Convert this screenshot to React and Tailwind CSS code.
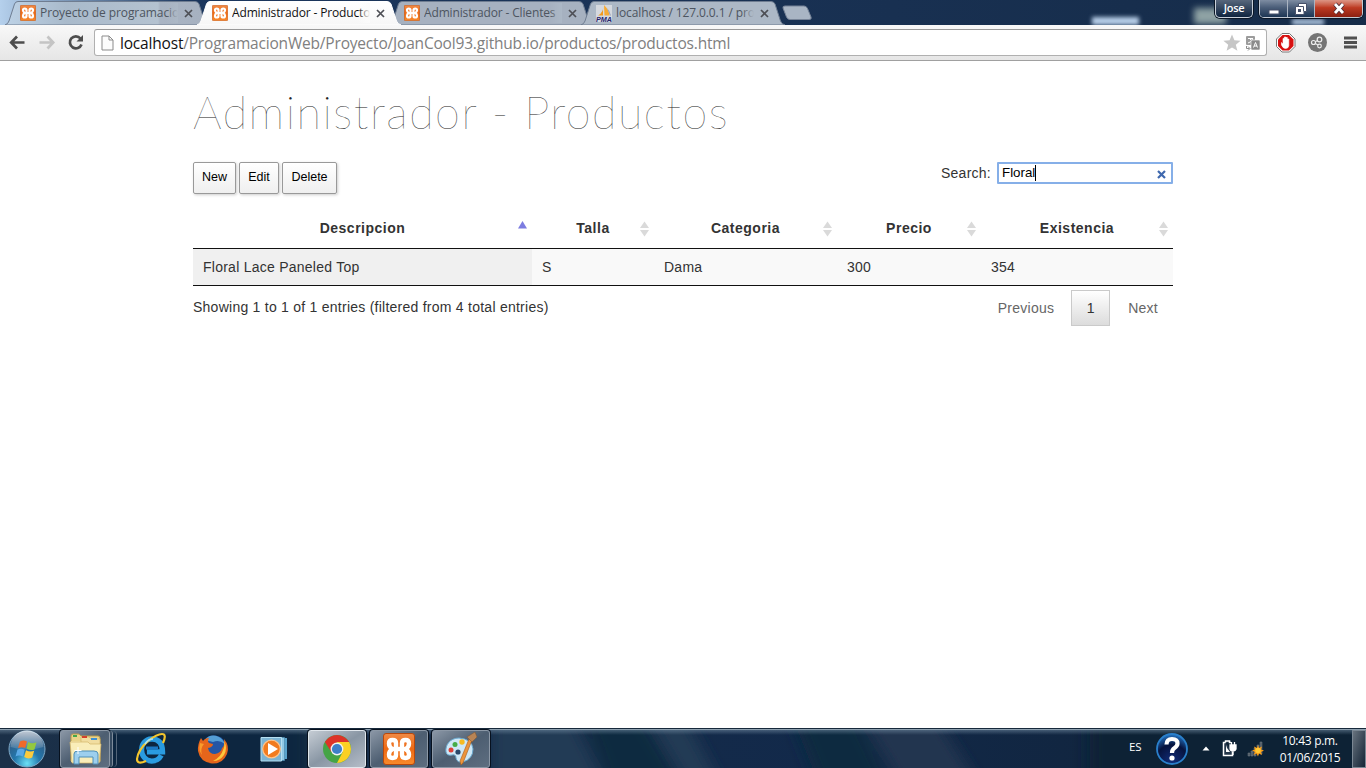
import React from "react";

const UI = "font-['Open_Sans','Noto_Sans',sans-serif]";

function Xampp({ size = 16 }) {
  return (
    <svg width={size} height={size} viewBox="0 0 32 32" className="shrink-0">
      <defs>
        <linearGradient id="xo" x1="0" y1="0" x2="0" y2="1">
          <stop offset="0" stopColor="#f08a45" />
          <stop offset="0.5" stopColor="#ee6a14" />
          <stop offset="1" stopColor="#f98a2c" />
        </linearGradient>
      </defs>
      <rect x="0.5" y="0.5" width="31" height="31" rx="2.5" fill="url(#xo)" stroke="#b8480c" />
      <g fill="none" stroke="#fff" strokeWidth="4.4" strokeLinejoin="round" strokeLinecap="round">
        <path d="M13 13.500V10Q13 7 9.500 7T6 10.500Q6 14 9.500 16Q6 18 6 21.500T9.500 25Q13 25 13 22V18.500" />
        <path d="M19 13.500V10Q19 7 22.500 7T26 10.500Q26 14 22.500 16Q26 18 26 21.500T22.500 25Q19 25 19 22V18.500" />
        <path d="M11 16H21" />
      </g>
    </svg>
  );
}

function PmaIcon() {
  return (
    <svg width="16" height="17" viewBox="0 0 16 17" className="shrink-0">
      <rect width="16" height="17" fill="#d5d9df" />
      <path d="M7 1Q8 7 2 10.500H7Z" fill="#f29a1c" />
      <path d="M8 0Q13 5 13.500 10.500H8.500Z" fill="#f7ab35" />
      <path d="M11 3Q14 6 15 10.500H14Z" fill="#9aa2b8" />
      <text x="0" y="16.500" fontSize="7" fontWeight="bold" fontStyle="italic" fontFamily="Liberation Sans" textLength="16" lengthAdjust="spacingAndGlyphs" fill="#26266e">PMA</text>
    </svg>
  );
}

function Tab({ title, icon, active = false, fill, spacing }) {
  return (
    <div className={`relative h-[25px] w-[192px] shrink-0 ${active ? "z-10" : ""}`}>
      <svg className="absolute -left-1 top-0" width="206" height="25" viewBox="-4 0 206 25">
        <defs>
          <linearGradient id="inactiveTab" x1="0" x2="1">
            <stop offset="0" stopColor="#bdd2e6" />
            <stop offset="0.3" stopColor="#a9bacb" />
            <stop offset="0.75" stopColor="#b4c2d0" />
            <stop offset="0.76" stopColor="#a9b4c3" />
            <stop offset="1" stopColor="#a6b1c0" />
          </linearGradient>
          <linearGradient id="activeTab" x1="0" x2="0" y1="0" y2="1">
            <stop offset="0" stopColor="#ffffff" />
            <stop offset="1" stopColor="#f7f7f7" />
          </linearGradient>
        </defs>
        <path d="M-3 25Q0 24 1 21L6.500 4Q7.500 1.500 10 1.500H187Q190 1.500 191 4L196.500 21Q197.500 24 201 25Z" fill={fill} stroke={active ? "#ffffff" : "#6f7d91"} strokeWidth="1" />
      </svg>
      <div className="relative flex h-[25px] items-center pl-3 pt-px">
        {icon}
        <div className={`relative ml-1 h-5 w-[138px] overflow-hidden whitespace-nowrap text-[12px] leading-[19px] ${spacing} ${active ? "text-[#111]" : "text-[#4d5560]"}`}>
          {title}
          <span className={`absolute right-0 top-0 h-5 w-3 bg-linear-to-r from-transparent ${active ? "to-[#fbfbfb]" : "to-[#acb8c6]"}`} />
        </div>
        <svg width="9" height="9" viewBox="0 0 9 9" className="ml-[6px] shrink-0">
          <path d="M1 1L8 8M8 1L1 8" stroke="#4d4f55" strokeWidth="1.7" />
        </svg>
      </div>
    </div>
  );
}

function WindowControls() {
  return (
    <div className="absolute right-[3px] top-0 flex gap-[6px]">
      <div className="flex h-[18px] w-[38px] items-center justify-center rounded-b-[5px] border border-t-0 border-[#c9d0d9] bg-linear-to-b from-[#58677c] to-[#0f2540] pb-px text-[11px] font-semibold tracking-[-0.3px] text-white shadow-[0_0_0_1px_#0a1626]">Jose</div>
      <div className="flex h-[18px] w-[104px] overflow-hidden rounded-b-[5px] border border-t-0 border-[#c3cad4] shadow-[0_0_0_1px_#0a1626]">
        <div className="flex w-[28px] items-center justify-center border-r border-[#aab4c2] bg-linear-to-b from-[#7e8da2] via-[#4a5d78] via-45% to-[#1d3654]">
          <svg width="14" height="14"><rect x="2" y="8" width="10" height="4" fill="#fff" stroke="#46516a" /></svg>
        </div>
        <div className="flex w-[27px] items-center justify-center border-r border-[#aab4c2] bg-linear-to-b from-[#7e8da2] via-[#4a5d78] via-45% to-[#1d3654]">
          <svg width="14" height="14" viewBox="0 0 14 14">
            <path d="M4.500 1.500H12.500V9.500H10V12.500H1.500V4.500H4.500Z" fill="#fff" stroke="#46516a" />
            <path d="M4.500 4.500H9.500V9.500" fill="none" stroke="#46516a" />
            <rect x="4" y="7" width="3" height="3" fill="#46516a" />
          </svg>
        </div>
        <div className="flex flex-1 items-center justify-center bg-linear-to-b from-[#dc9585] via-[#bd3a22] via-45% to-[#8c2012]">
          <svg width="14" height="13" viewBox="0 0 14 13">
            <path d="M3 2L11 11M11 2L3 11" stroke="#4b2b36" strokeWidth="4.500" />
            <path d="M3 2L11 11M11 2L3 11" stroke="#fff" strokeWidth="2.800" />
          </svg>
        </div>
      </div>
    </div>
  );
}

function TitleBar() {
  return (
    <div className="relative flex h-[25px] bg-linear-to-r from-[#b5d0ec] from-0% via-[#1b365d] via-14% to-[#162c49] pl-2">
      <div className="absolute left-[1092px] top-[17px] h-2 w-[47px] bg-[#b8cfe9] blur-[2px]" />
      <div className="absolute left-[1194px] top-[8px] h-4 w-8 bg-[#8fa3a5] blur-[3px]" />
      <div className="absolute left-[1292px] top-[19px] h-[6px] w-8 bg-[#a9bfd9] blur-[2px]" />
      <Tab title="Proyecto de programacion" icon={<Xampp />} fill="url(#inactiveTab)" spacing="tracking-[-0.08px]" />
      <Tab title="Administrador - Productos" icon={<Xampp />} fill="url(#activeTab)" active spacing="tracking-[-0.15px]" />
      <Tab title="Administrador - Clientes" icon={<Xampp />} fill="#a6b1c0" spacing="tracking-[-0.15px]" />
      <Tab title="localhost / 127.0.0.1 / proyecto" icon={<PmaIcon />} fill="#acb8c6" spacing="tracking-[-0.1px]" />
      <svg width="34" height="16" viewBox="0 0 34 16" className="ml-[6px] mt-[5px]">
        <path d="M1 3Q0.500 1 3 1H22Q24.500 1 25.500 3.500L29 12Q30 14.500 27 14.500H8Q5.500 14.500 4.500 12Z" fill="#a9b5c4" stroke="#778498" />
      </svg>
      <WindowControls />
    </div>
  );
}

function Toolbar() {
  return (
    <div className="relative flex h-9 items-center border-b border-[#a0a0a0] bg-linear-to-b from-[#f8f8f8] to-[#e6e6e6]">
      <svg width="94" height="35" viewBox="0 0 94 35" fill="none" strokeWidth="2.700" className="shrink-0">
        <path d="M24.500 17.500H12M17 11.500L11.200 17.500L17 23.500" stroke="#4d4d4d" />
        <path d="M39.500 17.500H52M47.500 11.500L53.200 17.500L47.500 23.500" stroke="#c4c4c4" />
        <path d="M80.500 13.500A6 6 0 1 0 81.500 19.500" stroke="#4d4d4d" />
        <path d="M83 10V16.500H76.500Z" fill="#4d4d4d" />
      </svg>
      <div className="flex h-[27px] w-[1173px] items-center rounded-[3px] border border-[#b0b0b0] border-t-[#999] bg-white">
        <svg width="13" height="16" viewBox="0 0 13 16" className="ml-[6px] shrink-0">
          <path d="M1 1H8L12 5V15H1Z" fill="#fcfcfc" stroke="#8b8b8b" />
          <path d="M8 1V5H12" fill="none" stroke="#8b8b8b" />
        </svg>
        <div className="ml-[6px] flex-1 whitespace-nowrap text-[15.5px] leading-6 tracking-[-0.19px] text-[#808080]"><span className="text-[#111]">localhost</span>/ProgramacionWeb/Proyecto/JoanCool93.github.io/productos/productos.html</div>
        <svg width="44" height="22" viewBox="0 0 44 22" className="shrink-0">
          <path d="M10 2.500L12.400 8.300L18.600 8.700L13.800 12.700L15.400 18.700L10 15.400L4.600 18.700L6.200 12.700L1.400 8.700L7.600 8.300Z" fill="#c6c6c6" />
          <rect x="24" y="4" width="9" height="9" rx="1" fill="#9c9c9c" />
          <path d="M26 6.500H31M28.500 6V8M30.500 7Q29 10.500 26 11" stroke="#fff" fill="none" />
          <rect x="29" y="8" width="9" height="10" rx="1" fill="#8b8b8b" stroke="#fff" strokeWidth="0.600" />
          <path d="M31.500 15.500L33.500 10.500L35.500 15.500M32 14H35" stroke="#fff" fill="none" />
          <path d="M24.500 14V16.500H27.500M26 14.500L28 16.500L26 18.500" stroke="#8b8b8b" fill="none" />
        </svg>
      </div>
      <svg width="99" height="35" viewBox="1267 0 99 35" className="shrink-0">
        <path d="M1282 8.500H1289.500L1295 14V21.500L1289.500 27H1282L1276.500 21.500V14Z" fill="#fff" stroke="#777" />
        <path d="M1282.500 10H1289L1293.500 14.500V21L1289 25.500H1282.500L1278 21V14.500Z" fill="#d71010" />
        <path d="M1281.500 17.500L1283 19V13.500H1284.300V17V12H1285.800V17V12.500H1287.300V17V14H1288.800V20.500Q1288.500 23.500 1285.500 23.500Q1283 23.500 1281.500 20Z" fill="#fff" stroke="#fff" strokeWidth="0.600" />
        <circle cx="1317.500" cy="17.500" r="9.500" fill="#757575" />
        <g fill="none" stroke="#eee" strokeWidth="1.200"><circle cx="1313.500" cy="17.500" r="2" /><circle cx="1319.500" cy="14.500" r="2.300" /><circle cx="1319.500" cy="21" r="1.800" /><path d="M1315.300 16.700L1317.500 15.500M1315.300 18.500L1318 20" /></g>
        <path d="M1344 13H1357M1344 17.500H1357M1344 22H1357" stroke="#505050" strokeWidth="2.800" />
      </svg>
    </div>
  );
}

function Sort({ active = false }) {
  return (
    <svg width="9" height="16" viewBox="0 0 9 16" className="absolute right-[5px] top-[12px]">
      <path d={active ? "M0 7.500H9L4.500 0Z" : "M0 7H9L4.500 0.500Z"} fill={active ? "#7c7ce0" : "#dadada"} />
      {!active && <path d="M0 9H9L4.500 15.500Z" fill="#dadada" />}
    </svg>
  );
}

const columns = ["Descripcion", "Talla", "Categoria", "Precio", "Existencia"];
const row = ["Floral Lace Paneled Top", "S", "Dama", "300", "354"];
const grid = "grid grid-cols-[339px_122px_183px_144px_192px]";

function Page() {
  return (
    <main className="flex-1 bg-white font-['Liberation_Sans',Arial,sans-serif] text-[14px] text-[#333]">
      <div className="mx-auto w-[980px]">
        <h1 className="mt-[26px] h-[50px] whitespace-nowrap font-['Lato',sans-serif] text-[45px] font-thin leading-[50px] tracking-[1.5px] text-[#222]">Administrador - Productos</h1>
        <div className="mt-[25px] flex h-[42px] items-start justify-between">
          <div className="flex gap-[3px] text-[12.5px] text-black">
            {[["New", "w-[43px]"], ["Edit", "w-[40px]"], ["Delete", "w-[55px]"]].map(([label, w]) => (
              <button key={label} className={`${w} h-8 rounded-[2px] border border-[#999] bg-linear-to-b from-white to-[#efefef] pb-px shadow-[1px_1px_3px_#ccc]`}>{label}</button>
            ))}
          </div>
          <label className="flex h-[22px] items-center tracking-[0.25px]">
            Search:
            <span className="ml-[6px] flex h-[22px] w-[176px] items-center rounded-[1px] border-2 border-[#86afe8] bg-white pl-[3px] pr-[5px] text-[13.33px] tracking-normal text-black">
              Floral<span className="h-4 w-px bg-black" />
              <svg width="9" height="9" viewBox="0 0 9 9" className="ml-auto mt-[2px]"><path d="M1 1L8 8M8 1L1 8" stroke="#3f68ae" strokeWidth="2.200" /></svg>
            </span>
          </label>
        </div>
        <div className={`${grid} mt-[5px] h-[40px] border-b border-[#111] font-bold tracking-[0.5px]`}>
          {columns.map((c, i) => (
            <div key={c} className="relative text-center leading-[38px]">{c}<Sort active={i === 0} /></div>
          ))}
        </div>
        <div className={`${grid} h-[37px] border-b border-[#111] bg-[#f9f9f9] leading-[36px] tracking-[0.25px]`}>
          {row.map((c, i) => (
            <div key={c} className={`pl-[10px] ${i === 0 ? "bg-[#f0f0f0]" : ""}`}>{c}</div>
          ))}
        </div>
        <div className="flex items-start justify-between tracking-[0.25px]">
          <div className="pt-[11px] leading-5">Showing 1 to 1 of 1 entries (filtered from 4 total entries)</div>
          <div className="mt-[4px] flex h-9 items-center pr-[15px] text-[#666]">
            <span>Previous</span>
            <span className="ml-[17px] mr-[18px] flex h-9 w-[39px] items-center justify-center border border-[#cacaca] bg-linear-to-b from-white to-[#dcdcdc] text-[#333]">1</span>
            <span>Next</span>
          </div>
        </div>
      </div>
    </main>
  );
}

function StartOrb() {
  return (
    <svg width="40" height="38" viewBox="0 0 40 38">
      <defs>
        <radialGradient id="orb" cx="0.5" cy="0.9" r="0.8"><stop offset="0" stopColor="#6ce0f5" /><stop offset="0.45" stopColor="#2377ac" /><stop offset="1" stopColor="#34577d" /></radialGradient>
        <linearGradient id="orbShine" x1="0" x2="0" y1="0" y2="1"><stop offset="0" stopColor="#fff" stopOpacity="0.7" /><stop offset="1" stopColor="#fff" stopOpacity="0.1" /></linearGradient>
      </defs>
      <circle cx="20" cy="19" r="18" fill="url(#orb)" stroke="#7fa9c7" />
      <path d="M3.500 17A16.500 16.500 0 0 1 36.500 17Q20 22 3.500 17Z" fill="url(#orbShine)" />
      <path d="M13 11.500Q16.500 9.500 20 11.500L18.200 18Q15 16.500 11 18Z" fill="#f06a2a" />
      <path d="M21.200 12Q25 14.500 29.500 12.300L27.500 19.500Q23.500 21 19.500 18.500Z" fill="#93c840" />
      <path d="M10.500 19.500Q14 17.700 17.800 19.700L15.900 26.500Q12 24.500 8.500 26.500Z" fill="#5aa9e6" />
      <path d="M19 20.200Q23 22.500 27.200 20.800L25.200 27.500Q21 29.500 17.200 27Z" fill="#fccb3d" />
    </svg>
  );
}

function Explorer() {
  return (
    <svg width="34" height="34" viewBox="0 0 34 34">
      <path d="M3 4Q3 2 5 2H11L13 4H30Q32 4 32 6V29H3Z" fill="#e9d48a" stroke="#b89a4b" />
      <path d="M3 9H31V30H3Z" fill="#f8e9ad" />
      <path d="M13 5H21L23 7H32V30H13Z" fill="#f1dda0" stroke="#d2b568" strokeWidth="0.700" />
      <rect x="5" y="3" width="4" height="2" fill="#43a84b" /><rect x="14" y="4" width="5" height="2" fill="#d4412c" /><rect x="23" y="6" width="6" height="2" fill="#3d8fd2" />
      <path d="M2 10H20L22 12H33L31 31H4Z" fill="#f9edb9" stroke="#d2b568" strokeWidth="0.700" />
      <path d="M6 32V22Q6 19 10 19H26Q30 19 30 22V32H25V25H11V32Z" fill="#9dcfee" stroke="#4e8fb8" />
      <path d="M10 15V22M6.500 18.500H13.500" stroke="#fff" />
    </svg>
  );
}

function IE() {
  return (
    <svg width="34" height="34" viewBox="0 0 34 34" fill="none">
      <path d="M28.500 24Q25 30.500 17.500 30.500C2 30 2 5.500 17.500 5Q30 5.500 30 20H12" stroke="#2a9be0" strokeWidth="6" transform="translate(2.500 2.500) scale(.87)" />
      <path d="M12 16H24" stroke="#1b78c4" strokeWidth="3" />
      <path d="M29 11Q33 2 28 2Q23 2 14 9Q4 18 3 27Q3 33 12 29" stroke="#f4c52d" strokeWidth="2.200" />
      <path d="M11 12Q14 7 19 7" stroke="#a4e3ff" strokeWidth="1.500" />
    </svg>
  );
}

function Firefox() {
  return (
    <svg width="34" height="34" viewBox="0 0 34 34">
      <circle cx="18" cy="16" r="12.500" fill="#2456a5" />
      <path d="M9 8Q14 1 23 5Q27 7 29 12Q23 7 17 10Z" fill="#549ed5" />
      <path d="M28 7Q34 14 31 22Q27 32 16 31.500Q4 30 2 19Q1.500 12 5 6L7 9Q9 6 13 6Q11 9 13 11L17 12Q17 15 12 16Q13 22 19 22Q25 21 26 16Q29 14 28 7Z" fill="#e5651b" />
      <path d="M28 9Q32 16 28 23Q24 29 17 29Q25 25 27 18Q29 15 28 9Z" fill="#ffc83d" />
      <path d="M4 11Q2 18 6 23Q4 16 8 12Z" fill="#f99b2b" />
    </svg>
  );
}

function MediaPlayer() {
  return (
    <svg width="30" height="30" viewBox="0 0 30 30">
      <path d="M9 4H28V25H9Z" fill="#5aa3cc" /><path d="M6 3.500H25.500V26.500H6Z" fill="#91c9e5" stroke="#4c8cb2" strokeWidth="0.700" />
      <path d="M2 3.500H22.500V27H2Z" fill="#7bb3d3" stroke="#b5dff1" />
      <circle cx="12.500" cy="15" r="8.800" fill="#f17b1f" stroke="#ffc48a" strokeWidth="1.200" />
      <path d="M9 9L19 15L9 21Z" fill="#fff" />
    </svg>
  );
}

function Chrome() {
  return (
    <svg width="30" height="30" viewBox="-15 -15 30 30">
      <circle r="14" fill="#45a446" />
      <path d="M-12.120 -7A14 14 0 0 1 12.120 -7H0L-5.500 3.200Z" fill="#dd3328" />
      <path d="M12.120 -7A14 14 0 0 1 0 14L5.600 3.200L0 -7Z" fill="#fbd023" />
      <circle r="6.400" fill="#f3f3f3" /><circle r="5.100" fill="#3e80c9" />
    </svg>
  );
}

function Paint() {
  return (
    <svg width="34" height="34" viewBox="0 0 34 34">
      <path d="M15 6C6 6 1 13 2 20Q3 24 8 23Q12 22 12 26Q13 31 19 30Q29 27 29 17Q28 7 15 6Z" fill="#cfe8f6" stroke="#6aa9cf" />
      <circle cx="7" cy="18" r="2.500" fill="#de4038" /><circle cx="11" cy="12.500" r="2.500" fill="#47ad48" /><circle cx="18" cy="10" r="2.700" fill="#f6bb22" /><circle cx="14" cy="20" r="2.600" fill="#294769" />
      <path d="M28 8L19 31L17 33L16 29L25 7Z" fill="#ec943c" stroke="#a65b1a" strokeWidth="0.600" />
      <path d="M23 5L31 0L33 5L28 10Z" fill="#b88455" stroke="#80552f" strokeWidth="0.500" />
    </svg>
  );
}

function TaskButton({ children, active = false, className }) {
  return (
    <div className={`flex h-[38px] items-center justify-center rounded-[3px] border shadow-[0_0_0_1px_#07111e] ${active ? "border-[#e0e6ec] bg-linear-to-br from-[#c5ccd4] via-[#8996a4] to-[#b5bdc8]" : "border-[#8c98a6] bg-linear-to-br from-[#8b97a6] via-[#4d5e71] to-[#5e6e80]"} ${className}`}>{children}</div>
  );
}

function Taskbar() {
  return (
    <footer className={`relative flex h-10 shrink-0 items-center overflow-hidden border-t border-[#17293b] bg-linear-to-r from-[#1b3048] from-0% via-[#12294a] via-60% to-[#102236] ${UI}`}>
      <svg className="absolute inset-0" width="1366" height="40" viewBox="0 0 1366 40" preserveAspectRatio="none">
        <defs>
          <filter id="soft"><feGaussianBlur stdDeviation="8 1" /></filter>
          <linearGradient id="edge" x1="0" x2="0" y1="0" y2="1"><stop offset="0" stopColor="#7891a7" /><stop offset="1" stopColor="#7891a7" stopOpacity="0" /></linearGradient>
        </defs>
        <g filter="url(#soft)">
          <path d="M100 -5H310V45H100Z" fill="#0f2740" />
          <path d="M490 -5H575L600 45H490Z" fill="#243a54" />
          <path d="M585 -5H645L675 45H605Z" fill="#10293f" />
          <path d="M650 -5H688L715 45H680Z" fill="#233b55" />
          <path d="M795 -5H860L885 45H815Z" fill="#102b40" />
          <path d="M865 -5H940L972 45H895Z" fill="#24364f" />
          <path d="M1090 -5H1366V45H1090Z" fill="#0f2135" />
        </g>
        <rect y="0" width="1366" height="1" fill="#8da0af" />
        <rect y="1" width="1366" height="5" fill="url(#edge)" opacity="0.5" />
      </svg>
      <div className="relative flex h-[38px] w-full items-center">
        <div className="ml-[7px] w-10"><StartOrb /></div>
        <TaskButton className="ml-[13px] w-[50px]"><Explorer /></TaskButton>
        <div className="h-[36px] w-[3px] rounded-r border-r border-[#7d8b9a] bg-[#354a60]" />
        <div className="h-[36px] w-[4px] rounded-r border-r border-[#536579]" />
        <div className="ml-[17px] w-[34px]"><IE /></div>
        <div className="ml-[28px] w-[34px]"><Firefox /></div>
        <div className="ml-[29px] w-[30px]"><MediaPlayer /></div>
        <TaskButton active className="ml-[19px] w-[58px]"><Chrome /></TaskButton>
        <TaskButton className="ml-[4px] w-[58px]"><Xampp size={32} /></TaskButton>
        <TaskButton className="ml-[4px] w-[58px]"><Paint /></TaskButton>
        <div className="ml-auto flex h-full items-center text-[12px] text-white">
          <span className="mb-1 w-[26px] text-[11.5px] tracking-[-0.2px]">ES</span>
          <svg width="34" height="34" viewBox="0 0 34 34">
            <defs><radialGradient id="help" cx="0.5" cy="0.9" r="0.9"><stop offset="0" stopColor="#112d7a" /><stop offset="0.6" stopColor="#06133e" /><stop offset="1" stopColor="#2476c7" /></radialGradient></defs>
            <circle cx="17" cy="17" r="15" fill="url(#help)" stroke="#2a80cc" strokeWidth="1.800" />
            <path d="M11.500 12.500Q11.500 7 17 7Q22.500 7 22.500 11.500Q22.500 14 19.500 16Q17 17.500 17 21" fill="none" stroke="#fff" strokeWidth="4.200" />
            <circle cx="17" cy="26" r="2.600" fill="#fff" />
          </svg>
          <svg width="8" height="5" viewBox="0 0 8 5" className="ml-[13px]"><path d="M0.500 4.500H7.500L4 0.500Z" fill="#fff" /></svg>
          <svg width="16" height="17" viewBox="0 0 16 17" className="ml-[12px]">
            <path d="M3.500 2.500H1.500V15.500H10.500V12M3.500 2.500V1H7.500V2.500H9" fill="#24374a" stroke="#fff" strokeWidth="1.500" />
            <path d="M4 5V12H8L5 8Z" fill="#fff" />
            <path d="M8 5H14V9Q13.500 11 11 11Q8 11 8 8ZM9.500 5V2M12.500 5V2M11 11V15" fill="#fff" stroke="#fff" strokeWidth="1.300" />
          </svg>
          <svg width="17" height="16" viewBox="0 0 17 16" className="ml-[9px]">
            <path d="M1 15V12H3V15ZM4 15V10H6V15ZM7 15V7H9V15ZM10 13V4H12V13ZM13 13V1H15V13Z" fill="#4e5861" stroke="#768089" strokeWidth="0.500" />
            <path d="M11 4L12 7L15 5.500L14 8.500L17 9.500L14 11L15 14L12 12.500L11 15.500L9.500 12.500L6.500 14L8 11L5 9.500L8 8.500L7 5.500L10 7Z" fill="#f99c14" />
            <circle cx="11" cy="9.500" r="2.700" fill="#ffca34" />
          </svg>
          <div className="ml-[15px] w-[62px] whitespace-nowrap text-center text-[12px] leading-[17px] tracking-[-0.3px]">10:43 p.m.<br />01/06/2015</div>
          <div className="ml-[11px] h-[38px] w-[14px] border border-[#7a8793] bg-linear-to-br from-[#68737e] to-[#152536]" />
        </div>
      </div>
    </footer>
  );
}

export default function App() {
  return (
    <div className="flex h-[768px] w-[1366px] flex-col overflow-hidden bg-white">
      <header className={`shrink-0 ${UI}`}><TitleBar /><Toolbar /></header>
      <Page />
      <Taskbar />
    </div>
  );
}
